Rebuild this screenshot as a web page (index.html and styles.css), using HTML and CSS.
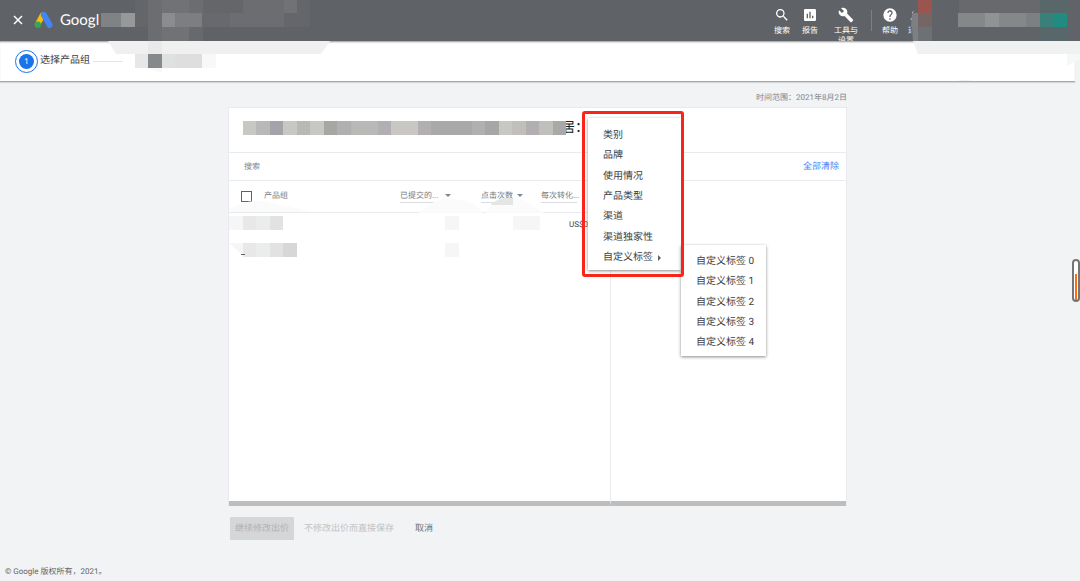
FILE: index.html
```html
<!DOCTYPE html>
<html lang="zh-CN">
<head>
<meta charset="utf-8">
<meta name="viewport" content="width=device-width, initial-scale=1">
<title>Google Ads</title>
<link rel="stylesheet" href="styles.css">
</head>
<body>
<header class="topbar">
  <button class="close" type="button" aria-label="关闭"><svg width="10" height="10" viewBox="0 0 10 10"><path d="M1 1l8 8M9 1l-8 8" stroke="#fff" stroke-width="1.5"/></svg></button>
  <a class="brand" href="#">
    <svg width="20" height="18" viewBox="0 0 20 18"><path d="M8.600 4.200L3.800 13" stroke="#fbbc04" stroke-width="5.600" stroke-linecap="round"/><path d="M9.800 3.800L15.600 14" stroke="#4285f4" stroke-width="6" stroke-linecap="round"/><circle cx="3.800" cy="13.800" r="3.200" fill="#34a853"/></svg>
    <span>Googl</span>
  </a>
  <nav class="tools">
    <button class="tool" type="button"><svg width="16" height="16" viewBox="0 0 24 24"><path fill="#fff" d="M15.5 14h-.8l-.3-.3A6.5 6.5 0 1 0 13.700 14.400l.3.3v.8l5 5 1.500-1.500zM9.500 14a4.500 4.500 0 1 1 0-9 4.500 4.500 0 0 1 0 9z"/></svg>搜索</button>
    <button class="tool" type="button"><svg width="16" height="16" viewBox="0 0 24 24"><path fill="#fff" d="M19 3H5a2 2 0 0 0-2 2v14c0 1.100.9 2 2 2h14a2 2 0 0 0 2-2V5a2 2 0 0 0-2-2zM9 17H7v-7h2zm4 0h-2V7h2zm4 0h-2v-4h2z"/></svg>报告</button>
    <button class="tool tool-wide" type="button"><svg width="16" height="16" viewBox="0 0 24 24"><path fill="#fff" d="M22.700 19l-9.100-9.100c.9-2.300.4-5-1.500-6.900-2-2-5-2.400-7.400-1.300L9 6 6 9 1.600 4.700C.4 7.100.9 10.100 2.900 12.100c1.900 1.900 4.600 2.400 6.900 1.500l9.100 9.100c.4.4 1 .4 1.400 0l2.300-2.300c.5-.4.5-1.100.1-1.400z"/></svg>工具与<br>设置</button>
    <span class="divider"></span>
    <button class="tool" type="button"><svg width="16" height="16" viewBox="0 0 24 24"><path fill="#fff" d="M12 2a10 10 0 1 0 0 20 10 10 0 0 0 0-20zm1 17h-2v-2h2zm2.070-7.750l-.9.920C13.450 12.900 13 13.500 13 15h-2v-.5c0-1.100.450-2.100 1.170-2.830l1.240-1.260A2 2 0 1 0 10 9H8a4 4 0 1 1 7.070 2.250z"/></svg>帮助</button>
    <button class="tool tool-narrow" type="button"><svg width="16" height="16" viewBox="0 0 24 24"><path fill="#fff" d="M12 22a2 2 0 0 0 2-2h-4a2 2 0 0 0 2 2zm6-6v-5c0-3.100-1.600-5.600-4.500-6.300V4a1.500 1.500 0 0 0-3 0v.7C7.600 5.400 6 7.900 6 11v5l-2 2v1h16v-1z"/></svg>通知</button>
  </nav>
</header>

<svg class="mask mask-left" width="340" height="82" viewBox="0 0 340 82" shape-rendering="crispEdges" aria-hidden="true">
  <path fill="#646669" d="M135 0h175v27H135z"/>
  <path fill="#6b6d71" d="M148 0h14v41h-14zM189 0h14v13h-14zM243 0h41v13h-41zM230 13h54v14h-54z"/>
  <path fill="#707276" d="M162 0h27v13h-27zM162 27h27v14h-27zM284 0h13v13h-13z"/>
  <path fill="#67696d" d="M189 27h14v14h-14zM202 13h28v14h-28z"/>
  <path fill="#808386" d="M101 13h20v14h-20z"/><path fill="#96989a" d="M121 13h14v14h-14z"/>
  <path fill="#8a8c8f" d="M162 13h13v14h-13z"/><path fill="#7c7e82" d="M175 13h27v14h-27z"/>
  <path fill="#f0f0f0" shape-rendering="auto" d="M108 41h222l-9 13H116z"/>
  <path fill="#e7e7e7" d="M135 54h13v14h-13z"/><path fill="#e9e9e9" d="M148 41h14v13h-14z"/><path fill="#85898c" d="M148 54h14v14h-14z"/>
  <path fill="#dfe1e1" d="M162 54h13v14h-13z"/><path fill="#dedede" d="M175 54h27v14h-27z"/><path fill="#f8f8f8" d="M202 54h14v14h-14zM148 68h14v5z"/>
</svg>
<svg class="mask mask-right" width="170" height="82" viewBox="0 0 170 82" aria-hidden="true">
  <path fill="#606367" d="M8 0h162v41H2C0 27 1 12 8 0z"/>
  <path fill="#7d8083" d="M2 13h6v14H1zM2 27h20v14H3z"/>
  <path fill="#9b554f" d="M8 0h14v13H8z"/><path fill="#756666" d="M8 13h14v14H8z"/><path fill="#6d7074" d="M8 27h14v14H8z"/>
  <path fill="#67696d" d="M49 0h81v13H49z"/>
  <path fill="#858889" d="M48 13h82v14H48z"/><path fill="#909394" d="M75 13h14v14H75z"/><path fill="#7d8083" d="M116 13h14v14h-14z"/>
  <path fill="#586769" d="M130 0h27v13h-27zM130 27h27v14h-27z"/>
  <path fill="#398078" d="M130 13h13v14h-13z"/><path fill="#208b80" d="M143 13h14v14h-14z"/>
  <path fill="#f0f1f1" d="M3 41h167v13H8z"/><path fill="#f6f8f7" d="M157 54h13v5l-13 7z"/>
  <path fill="#f0f1f2" d="M47 81q8-2 16 0z"/>
</svg>

<div class="steps">
  <span class="step-ring"><span class="step-num">1</span></span>
  <span class="step-name">选择产品组</span>
  <span class="step-line"></span>
</div>

<main class="page">
  <p class="range">时间范围：2021年8月2日</p>
  <section class="card">
    <h1 class="title">
      <svg width="323" height="14" viewBox="0 0 24 1" preserveAspectRatio="none" shape-rendering="crispEdges" aria-hidden="true">
        <path fill="#b8b8b7" d="M0 0h24v1H0z"/>
        <path fill="#c9c7c4" d="M0 0h1v1H0zM3 0h1v1H3zM5 0h1v1H5zM11 0h2v1h-2zM19 0h1v1h-1z"/>
        <path fill="#a3a4a9" d="M2 0h1v1H2z"/><path fill="#a5a7a5" d="M6 0h1v1H6zM18 0h1v1h-1z"/>
        <path fill="#a9a9a9" d="M14 0h3v1h-3zM23 0h1v1h-1z"/><path fill="#b1afb1" d="M7 0h1v1H7zM10 0h1v1h-1zM13 0h1v1h-1zM17 0h1v1h-1zM21 0h1v1h-1z"/>
        <path fill="#c1bfbc" d="M20 0h1v1h-1zM22 0h1v1h-1z"/>
      </svg><span class="title-text">居：</span>
    </h1>
    <div class="searchrow">
      <input class="search" type="text" placeholder="搜索" aria-label="搜索">
      <button class="clear" type="button">全部清除</button>
    </div>
    <div class="panes">
      <div class="pane">
        <table class="grid">
          <thead>
            <tr>
              <th class="c-check"><input class="check" type="checkbox" aria-label="全选"></th>
              <th class="c-name">产品组</th>
              <th class="c-sent"><span class="dotted">已提交的...</span><i class="caret"></i></th>
              <th class="c-click"><span class="dotted">点击次数</span><i class="caret"></i></th>
              <th class="c-conv"><span class="dotted">每次转化...</span></th>
            </tr>
          </thead>
          <tbody>
            <tr><td></td><td></td><td></td><td></td><td class="cost">US$0</td></tr>
          </tbody>
        </table>
        <svg class="mask mask-table" width="325" height="80" viewBox="0 0 325 80" aria-hidden="true">
          <path fill="#fbfbfb" d="M0 21Q14 12 35 13L84 24H0zM190 25q10-11 24-14h14q18 2 26 14zM256 25q10-12 25-14h12l22 14z"/>
          <path fill="#e4e5e5" d="M262 16q8-6 14-6h8v7h-22z"/>
          <path fill="#f6f6f6" d="M0 28h14v14H0zM216 28h14v14h-14zM216 55h14v14h-14zM284 28h27v14h-27zM0 55l14 13V55z"/>
          <path fill="#e8e8e8" d="M14 28h13v14H14zM14 55h13v14H14z"/><path fill="#ebedec" d="M27 28h14v14H27zM27 55h14v14H27z"/>
          <path fill="#e2e2e2" d="M41 28h13v14H41zM41 55h13v14H41z"/><path fill="#d7d7d7" d="M54 55h14v14H54z"/>
          <path fill="#666" d="M12 66h4v1h-4z"/>
        </svg>
      </div>
      <div class="pane pane-side"></div>
    </div>
    <div class="frame"></div>
    <ul class="menu">
      <li><button type="button">类别</button></li>
      <li><button type="button">品牌</button></li>
      <li><button type="button">使用情况</button></li>
      <li><button type="button">产品类型</button></li>
      <li><button type="button">渠道</button></li>
      <li><button type="button">渠道独家性</button></li>
      <li><button type="button">自定义标签<i class="arrow"></i></button></li>
    </ul>
    <ul class="menu submenu">
      <li><button type="button">自定义标签 0</button></li>
      <li><button type="button">自定义标签 1</button></li>
      <li><button type="button">自定义标签 2</button></li>
      <li><button type="button">自定义标签 3</button></li>
      <li><button type="button">自定义标签 4</button></li>
    </ul>
  </section>
  <div class="actions">
    <button class="btn btn-fill" type="button" disabled>继续修改出价</button>
    <button class="btn" type="button" disabled>不修改出价而直接保存</button>
    <button class="btn btn-cancel" type="button">取消</button>
  </div>
</main>
<footer class="foot">© Google 版权所有，2021。</footer>
<div class="gauge"><span></span></div>
</body>
</html>
```
FILE: styles.css
```css
* { box-sizing: border-box; }
body {
  margin: 0;
  min-height: 100vh;
  display: flex;
  flex-direction: column;
  position: relative;
  background: #f1f3f4;
  color: #5f6368;
  font-family: Roboto, "Noto Sans CJK SC", sans-serif;
  font-size: 8px;
  line-height: 12px;
  text-rendering: geometricPrecision;
}
button, input { font: inherit; color: inherit; border: 0; padding: 0; margin: 0; background: none; text-rendering: inherit; }
svg { display: block; flex: none; fill: none; }

.topbar {
  height: 41px;
  display: flex;
  align-items: flex-start;
  padding: 0 152px 0 13px;
  background: #5f6368;
  color: #fff;
}
.close { padding: 15px 0; margin-right: 11px; }
.brand {
  display: flex;
  align-items: center;
  gap: 6px;
  height: 40px;
  color: #fff;
  font-family: Lato, sans-serif;
  font-size: 15px;
  text-decoration: none;
}
.tools { display: flex; align-items: flex-start; margin-left: auto; }
.tool {
  width: 28px;
  padding-top: 7px;
  display: block;
  line-height: 10px;
  text-align: center;
}
.tool svg { margin: 0 auto 3px; }
.tool-wide { width: 44px; }
.tool-narrow { width: 24px; }
.divider { width: 1px; height: 21px; margin: 10px 4px 0 3px; background: #7d8084; }

.mask { position: absolute; top: 0; z-index: 2; pointer-events: none; }
.mask-left { left: 0; }
.mask-right { right: 0; }

.steps {
  height: 41px;
  display: flex;
  align-items: center;
  margin-right: 5px;
  padding: 0 15px;
  background: #fff;
  border-bottom: 1px solid #a5a9ac;
  box-shadow: 0 1px 1px #d5d8da, inset 0 2px 2px -1px #999;
}
.step-ring {
  padding: 3px;
  border: 1px solid #1a73e8;
  border-radius: 50%;
}
.step-num {
  display: block;
  width: 15px;
  height: 15px;
  border-radius: 50%;
  background: #1a73e8;
  color: #fff;
  line-height: 15px;
  text-align: center;
}
.step-name { margin: 0 3px 0 2px; color: #3c4043; font-size: 10px; }
.step-line { width: 30px; height: 1px; background: #e4e4e4; }

.page { width: 100%; max-width: 624px; margin: 0 auto; padding-right: 5px; }
.range { margin: 10px 0 3px; text-align: right; color: #80868b; }
.card { position: relative; background: #fff; border: 1px solid #e8eaed; border-bottom: 0; }
.title {
  display: flex;
  align-items: center;
  height: 45px;
  margin: 0;
  padding: 0 14px 4px;
  border-bottom: 1px solid #e8eaed;
  font-size: 14px;
  font-weight: 400;
  color: #202124;
}
.title-text { margin-left: -5px; }
.title svg { position: relative; z-index: 1; }
.searchrow {
  display: flex;
  align-items: center;
  justify-content: space-between;
  height: 28px;
  padding: 1px 7px 0 15px;
  border-bottom: 1px solid #e8eaed;
}
.search { flex: 1; outline: 0; }
.search::placeholder { color: #80868b; opacity: 1; }
.clear { color: #4285f4; font-size: 9px; }
.panes { display: flex; min-height: 325px; }
.pane { position: relative; width: 381px; border-bottom: 5px solid #bdbdbd; }
.pane-side { flex: 1; border-left: 1px solid #e8eaed; }
.grid { width: 100%; table-layout: fixed; border-collapse: collapse; }
.grid th {
  height: 31px;
  padding: 0;
  border-bottom: 1px solid #e8eaed;
  color: #757a7f;
  font-weight: 400;
  text-align: left;
  white-space: nowrap;
}
.grid td { height: 26px; padding: 0; white-space: nowrap; }
.grid .cost { padding-left: 28px; color: #3c4043; }
.c-check { width: 35px; }
.c-name { width: 136px; }
.c-sent { width: 81px; }
.c-click { width: 60px; }
.check {
  appearance: none;
  display: block;
  width: 11px;
  height: 11px;
  margin-left: 12px;
  border: 1px solid #5f6368;
}
.dotted { display: inline-block; width: 36px; border-bottom: 1px solid #dadce0; }
.caret {
  display: inline-block;
  margin-left: 9px;
  vertical-align: middle;
  border: 3px solid transparent;
  border-top-color: #80868b;
  border-bottom: 0;
}
.c-click .caret { margin-left: 0; }
.mask-table { left: 0; top: 7px; }

.frame {
  position: absolute;
  left: 353px;
  top: 3px;
  z-index: 6;
  width: 102px;
  height: 166px;
  border: 3px solid #fb2419;
  border-radius: 3px;
  pointer-events: none;
}
.menu {
  position: absolute;
  left: 359px;
  top: 10px;
  z-index: 3;
  width: 93px;
  height: 152px;
  display: flex;
  flex-direction: column;
  justify-content: space-between;
  margin: 0;
  padding: 8px 0 2px;
  list-style: none;
  background: #fff;
  box-shadow: 0 1px 3px #888;
  color: #3c4043;
  font-size: 10px;
}
.menu button {
  display: flex;
  align-items: center;
  width: 100%;
  height: 20px;
  padding-left: 15px;
  white-space: nowrap;
}
.submenu { left: 452px; top: 137px; z-index: 5; width: 85px; height: 111px; padding: 7px 0 3px; }
.arrow { margin-left: 5px; border: 3px solid transparent; border-left-color: #5f6368; border-right: 0; }

.actions { display: flex; align-items: center; padding: 11px 2px 0; font-size: 9px; }
.btn { height: 23px; padding: 1px 10px 0; color: #c0c2c4; }
.btn-fill { padding: 1px 5px 0; border-radius: 1px; background: #d5d6d7; color: #b0b1b2; }
.btn-cancel { margin-left: 1px; color: #70757a; }
.foot { margin-top: auto; padding: 0 5px 3px; }

.gauge {
  position: absolute;
  right: 0;
  top: 259px;
  display: flex;
  width: 8px;
  height: 43px;
  padding: 13px 1px 0;
  border: 2px solid #757575;
  border-radius: 4px;
  background: #fff;
}
.gauge span { flex: 1; background: #ff6d13; }
```
